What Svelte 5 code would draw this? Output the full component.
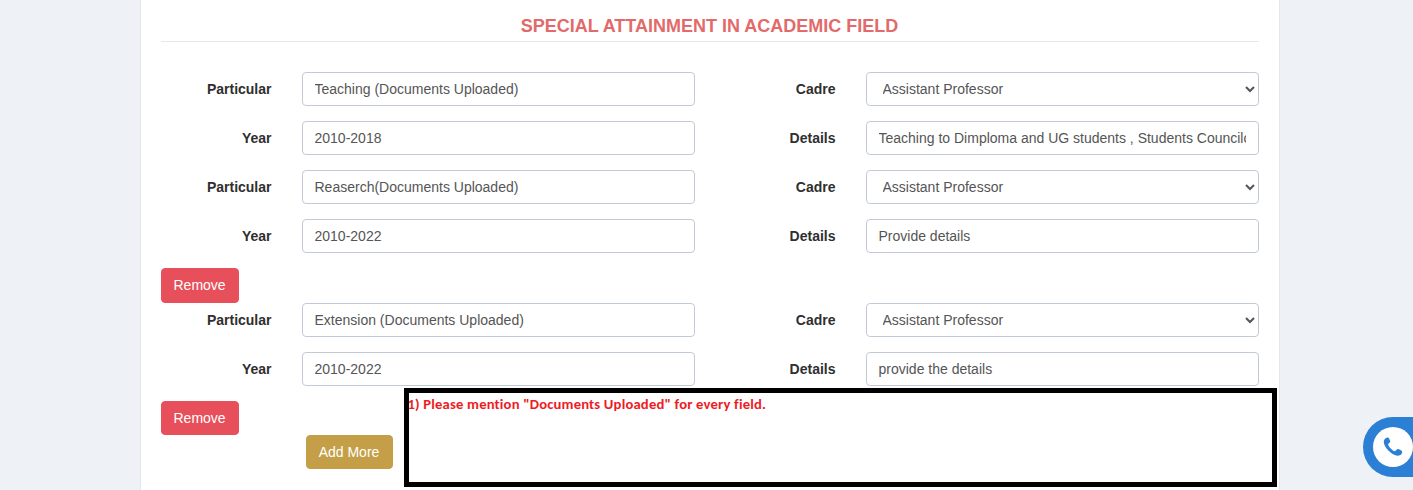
<script>
  let entries = $state([
    { particular: 'Teaching (Documents Uploaded)', year: '2010-2018', details: 'Teaching to Dimploma and UG students , Students Councilor', removable: false },
    { particular: 'Reaserch(Documents Uploaded)', year: '2010-2022', details: 'Provide details', removable: true },
    { particular: 'Extension (Documents Uploaded)', year: '2010-2022', details: 'provide the details', removable: true }
  ]);
</script>

<div class="page">
  <main class="panel">
    <h4>SPECIAL ATTAINMENT IN ACADEMIC FIELD</h4>
    {#each entries as entry, i}
      <section class="entry">
        <label for="particular-{i}">Particular</label>
        <input id="particular-{i}" type="text" bind:value={entry.particular} />
        <label for="cadre-{i}">Cadre</label>
        <select id="cadre-{i}"><option>Assistant Professor</option></select>
        <label for="year-{i}">Year</label>
        <input id="year-{i}" type="text" bind:value={entry.year} />
        <label for="details-{i}">Details</label>
        <input id="details-{i}" type="text" bind:value={entry.details} />
      </section>
      {#if entry.removable}
        <button class="remove" class:tall={i === 1} type="button">Remove</button>
      {/if}
    {/each}
    <button class="add" type="button">Add More</button>
  </main>
  <div class="note"><span>1) Please mention "Documents Uploaded" for every field.</span></div>
  <div class="call">
    <span class="disc">
      <svg viewBox="0 0 24 24" width="24" height="24" aria-hidden="true">
        <path fill="#2b7fd4" d="M4.6 3.2C5.6 2.6 7.1 2.4 7.7 2.9C8.3 3.6 9.2 5.6 9.3 6.5C9.4 7.5 7.1 8.4 7.1 9.4C7.3 11.4 11.7 15.8 13.9 16.3C15 16.4 15.9 14.1 16.9 14.1C17.9 14.2 20.3 15.4 20.9 16.1C21.4 16.7 21.1 18.1 20.5 19.1C19.8 20.2 17.8 20.8 16.3 20.7C12.8 20.3 9.4 17.8 7.1 15.3C4.7 12.6 3 9.7 2.8 7.2C2.7 5.6 3.4 3.9 4.6 3.2Z" />
      </svg>
    </span>
  </div>
</div>

<style>
  :global(body) {
    margin: 0;
    overflow: hidden;
  }
  .page {
    position: relative;
    box-sizing: border-box;
    height: 490px;
    overflow: hidden;
    padding-left: 140px;
    background: #eef1f6;
    font: 14px/20px "Liberation Sans", Arial, sans-serif;
    color: #2f2f2f;
  }
  .panel {
    box-sizing: border-box;
    width: 1140px;
    height: 490px;
    padding: 0 20px;
    border: solid #e3e8ee;
    border-width: 0 1px;
    background: #fff;
  }
  h4 {
    box-sizing: border-box;
    height: 42px;
    margin: 0 0 30px;
    padding-top: 16px;
    padding-right: 1px;
    border-bottom: 1px solid #e7e8ea;
    color: #e26a6a;
    font-size: 18px;
    line-height: 20px;
    text-align: center;
  }
  .entry {
    display: grid;
    grid-template-columns: 111px 393px 111px 393px;
    grid-auto-rows: 34px;
    gap: 15px 30px;
    margin-bottom: 15px;
  }
  label {
    padding: 7px 0.5px 0 0;
    font-weight: 700;
    text-align: right;
  }
  input,
  select {
    box-sizing: border-box;
    width: 100%;
    height: 34px;
    margin: 0;
    padding: 6px 12px 6px 11.5px;
    border: 1px solid #c2cad8;
    border-radius: 4px;
    outline: 0;
    background: #fff;
    color: #555;
    font: inherit;
  }
  button {
    display: block;
    box-sizing: border-box;
    height: 34px;
    margin: 0;
    padding: 6px 12.5px 6px 11.5px;
    border: 1px solid #e7505a;
    border-radius: 4px;
    background: #e7505a;
    color: #fff;
    font: inherit;
  }
  .remove {
    width: 78px;
  }
  .remove.tall {
    height: 35px;
    padding-bottom: 7px;
  }
  .add {
    width: 87px;
    margin-left: 145px;
    border-color: #c49f47;
    background: #c49f47;
  }
  .note {
    position: absolute;
    left: 404px;
    top: 388px;
    box-sizing: border-box;
    width: 873px;
    height: 99px;
    border: 5px solid #000;
    background: #fff;
    color: #ed1c24;
    font: 700 14.67px/20px Carlito, Calibri, Lato, sans-serif;
    font-variant-ligatures: none;
    letter-spacing: 0.17px;
    white-space: nowrap;
  }
  .note span {
    display: block;
    margin: 1px 0 0 -1.5px;
  }
  .call {
    position: absolute;
    top: 417px;
    right: 0;
    display: flex;
    align-items: center;
    box-sizing: border-box;
    width: 50px;
    height: 60px;
    padding-left: 10px;
    border-radius: 30px 0 0 30px;
    background: #2b7fd4;
  }
  .disc {
    display: flex;
    align-items: center;
    justify-content: center;
    width: 40px;
    height: 40px;
    border-radius: 50%;
    background: #fff;
  }
</style>
